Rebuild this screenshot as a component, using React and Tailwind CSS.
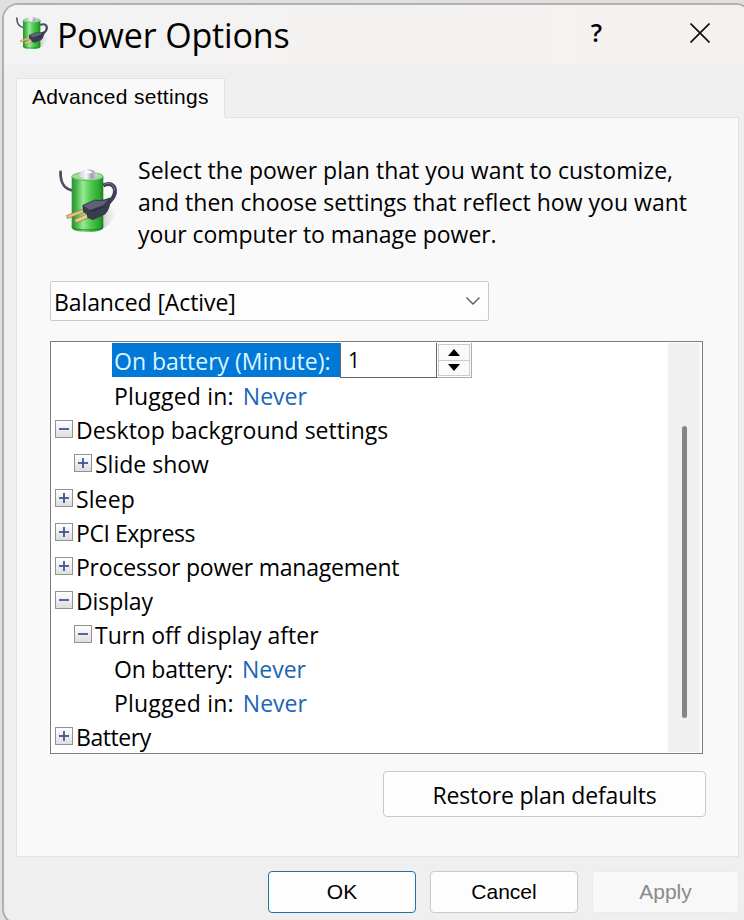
import { useState } from "react";

const plans = ["Balanced [Active]"];

const settings = [
  { label: "Plugged in:", value: "Never", level: 2, spacing: "tracking-[0.2px]" },
  { label: "Desktop background settings", level: 0, open: true, spacing: "tracking-normal" },
  { label: "Slide show", level: 1, open: false, spacing: "tracking-normal" },
  { label: "Sleep", level: 0, open: false, spacing: "tracking-[0.1px]", gap: true },
  { label: "PCI Express", level: 0, open: false, spacing: "tracking-[-0.45px]" },
  { label: "Processor power management", level: 0, open: false, spacing: "tracking-[-0.22px]" },
  { label: "Display", level: 0, open: true, spacing: "tracking-[-0.1px]" },
  { label: "Turn off display after", level: 1, open: true, spacing: "tracking-normal" },
  { label: "On battery:", value: "Never", level: 2, spacing: "tracking-[-0.2px]" },
  { label: "Plugged in:", value: "Never", level: 2, spacing: "tracking-[0.2px]" },
  { label: "Battery", level: 0, open: false, spacing: "tracking-[-0.45px]" },
];

const indents = ["pl-[4px]", "pl-[23px]", "pl-[63px]"];

// ================= ICONS =================

function BatteryIcon({ className }) {
  return (
    <svg viewBox="0 0 60 66" preserveAspectRatio="none" className={className}>
      <defs>
        <linearGradient id="cell" x1="0" x2="1">
          <stop offset="0" stopColor="#2c8f30" />
          <stop offset="0.15" stopColor="#45b548" />
          <stop offset="0.36" stopColor="#9be898" />
          <stop offset="0.6" stopColor="#4fcb4e" />
          <stop offset="0.88" stopColor="#2ba52f" />
          <stop offset="1" stopColor="#1b8021" />
        </linearGradient>
        <linearGradient id="cap" x1="0" x2="1">
          <stop offset="0" stopColor="#cfd1d6" />
          <stop offset="0.4" stopColor="#f7f7f9" />
          <stop offset="0.7" stopColor="#9c9fb6" />
          <stop offset="1" stopColor="#dcdde2" />
        </linearGradient>
        <linearGradient id="shade" x1="0" x2="1">
          <stop offset="0" stopColor="#8b8b8b" stopOpacity="0.7" />
          <stop offset="1" stopColor="#c4c4c4" stopOpacity="0" />
        </linearGradient>
      </defs>
      <path d="M44 42 L58 41 Q58 52 44 61 L36 63 Z" fill="url(#shade)" />
      <path d="M1.500 4 C1.500 14 4 21 14 22.500" fill="none" stroke="#4b4e63" strokeWidth="2.800" strokeLinecap="round" />
      <path d="M12.700 8 V59 Q13 64 28.500 64 Q44 64 44.300 59 V8 Z" fill="url(#cell)" />
      <path d="M12.900 58.500 Q14 62 28.500 62 Q43 62 44.100 58.500" fill="none" stroke="#1d7e24" strokeWidth="1" />
      <ellipse cx="28.500" cy="8.500" rx="15.600" ry="4.200" fill="#9ddc9a" stroke="#58ae58" strokeWidth="0.800" />
      <path d="M20 7 Q22 1.300 29 1.300 Q37 2 38.500 7 Q37 11.500 29 11.300 Q21 11 20 7 Z" fill="url(#cap)" />
      <path d="M25 4 Q29 2 34 4 Q31 6.500 25 4 Z" fill="#fff" />
      <path d="M44.300 17.500 C51 14 57 17 55.800 25 C55 31 50 33 47 38" fill="none" stroke="#3c4054" strokeWidth="4" />
      <path d="M45 16.500 C51 13.500 56 17 55.500 23" fill="none" stroke="#777b8d" strokeWidth="1" />
      <path d="M26 40.500 L7.500 47.500 L8.500 50.500 L27 44 Z" fill="#e9c27c" stroke="#8b6434" strokeWidth="0.600" />
      <path d="M31 44.500 L15.500 51.500 L17 54.800 L33 48.500 Z" fill="#edc98a" stroke="#8b6434" strokeWidth="0.600" />
      <path d="M23.500 37 L36 31.500 Q44 33 51 29.500 Q52.500 40 46 46.500 L34 52 L28.500 50 L27.500 46 L24 44 Z" fill="#393c4e" />
      <path d="M24.500 37.500 L36 32.500 Q42 34 49 32 L44 37 L31 42 Z" fill="#5f6274" />
      <path d="M31 43.500 L46 38.500" stroke="#232534" strokeWidth="0.900" />
    </svg>
  );
}

function ExpandBox({ open, onClick }) {
  return (
    <button
      onClick={onClick}
      className="flex h-[18px] w-[18px] shrink-0 items-center justify-center border border-[#929292] bg-linear-to-b from-white to-[#dedede]"
    >
      <svg viewBox="0 0 16 16" className="h-4 w-4" stroke="#3f5693" strokeWidth="1.800">
        <path d="M3 8 H13" />
        {!open && <path d="M8 3 V13" />}
      </svg>
    </button>
  );
}

// ================= TREE ROW =================

function SettingRow({ item }) {
  const [open, setOpen] = useState(item.open);

  return (
    <div className={`flex h-[34px] shrink-0 items-center whitespace-nowrap ${item.gap ? "mt-px" : ""} ${indents[item.level]}`}>
      {item.level < 2 && <ExpandBox open={open} onClick={() => setOpen(!open)} />}
      <span className={`pt-[2px] ${item.level < 2 ? "ml-[3px]" : ""} ${item.spacing}`}>{item.label}</span>
      {item.value && <span className="ml-[9px] pt-[2px] text-[#1a66b8]">{item.value}</span>}
    </div>
  );
}

export default function App() {
  const [minutes, setMinutes] = useState(1);

  return (
    <div className="h-[920px] w-[744px] overflow-hidden bg-[#e0e0e0] pt-[3px] pl-[2px] font-['Open_Sans',sans-serif] text-black">
      <div className="flex h-[922px] w-[750px] flex-col overflow-hidden rounded-[16px] border-2 border-[#b0b0b0] bg-[#efefef]">

        {/* ================= TITLE BAR ================= */}
        <div className="flex h-[60px] shrink-0 items-center bg-linear-to-r from-[#f3f3f3] to-[#f5f1ef] pl-[12px]">
          <BatteryIcon className="-mt-[4px] h-[34px] w-[33px]" />
          <h1 className="ml-[8px] text-[34px] leading-none tracking-[-0.15px] whitespace-nowrap">Power Options</h1>
          <span className="mb-[4px] ml-auto text-[25px] font-semibold">?</span>
          <svg viewBox="0 0 20 20" className="mr-[40px] mb-[4px] ml-[88px] h-5 w-5" stroke="#111" strokeWidth="1.700">
            <path d="M0.500 0.500 L19.500 19.500 M19.500 0.500 L0.500 19.500" />
          </svg>
        </div>

        {/* ================= TAB ================= */}
        <div className="mt-[13px] ml-[12px] flex h-[40px] w-[209px] shrink-0 items-center border border-b-0 border-[#e2e2e2] bg-[#f9f9f9] pb-[3px] pl-[15px] font-['Liberation_Sans',sans-serif] text-[21px] tracking-[0.3px] whitespace-nowrap">
          Advanced settings
        </div>

        <div className="-mt-px ml-[12px] flex h-[740px] w-[723px] shrink-0 flex-col border border-t-0 border-[#e2e2e2] bg-[#f9f9f9] pl-[33px]">
          <div className="-ml-[33px] h-px shrink-0 pl-[208px]">
            <div className="h-px bg-[#e2e2e2]" />
          </div>

          <div className="mt-[46px] flex h-[66px]">
            <BatteryIcon className="mt-[4px] ml-[9px] h-[66px] w-[60px] shrink-0" />
            <div className="-mt-[10px] ml-[19px] text-[23px] leading-[32px] tracking-[0.025px] whitespace-nowrap">
              <p>Select the power plan that you want to customize,</p>
              <p>and then choose settings that reflect how you want</p>
              <p className="tracking-[-0.05px]">your computer to manage power.</p>
            </div>
          </div>

          <button className="mt-[51px] flex h-[40px] w-[439px] shrink-0 items-center justify-between rounded-[2px] border border-[#cacaca] bg-[#fdfdfd] pr-[8px] pl-[3px] text-[23px]">
            <span className="pt-[2px] tracking-[-0.1px]">{plans[0]}</span>
            <svg viewBox="0 0 14 8" className="h-2 w-3.500" fill="none" stroke="#555" strokeWidth="1.300">
              <path d="M0.500 0.500 L7 7 L13.500 0.500" />
            </svg>
          </button>

          {/* ================= SETTINGS TREE ================= */}
          <div className="mt-[20px] flex h-[413px] w-[653px] shrink-0 overflow-hidden border border-[#7b7d80] bg-white text-[23px]">
            <div className="flex flex-1 flex-col">
              <div className="flex h-[36px] shrink-0 items-start pl-[61px]">
                <div className="mt-px flex h-[34px] w-[228px] items-center bg-[#0078d7] pt-[2px] pl-[2px] whitespace-nowrap text-[#dff4ff]">
                  On battery (Minute):
                </div>
                <div className="mt-px flex h-[35px] w-[97px] items-center border-r border-b border-l border-[#666] pt-px pl-[7px] text-[21px]">
                  {minutes}
                </div>
                <div className="mt-px flex h-[35px] w-[35px] flex-col border-r border-b border-[#aaa] p-px">
                  <button
                    onClick={() => setMinutes(minutes + 1)}
                    className="flex flex-1 items-center justify-center border border-[#ccc] bg-[#fafafa]"
                  >
                    <svg viewBox="0 0 12 7" className="h-[7px] w-3"><path d="M6 0 L12 7 H0 Z" /></svg>
                  </button>
                  <button
                    onClick={() => setMinutes(Math.max(0, minutes - 1))}
                    className="flex flex-1 items-center justify-center border border-t-0 border-[#ccc] bg-[#fafafa]"
                  >
                    <svg viewBox="0 0 12 7" className="h-[7px] w-3"><path d="M0 0 H12 L6 7 Z" /></svg>
                  </button>
                </div>
              </div>

              {settings.map((item, index) => (
                <SettingRow key={index} item={item} />
              ))}
            </div>

            <div className="mt-px mr-[2px] mb-px w-[32px] bg-[#f0f0f0] pt-[83px] pl-[14px]">
              <div className="h-[292px] w-[5px] rounded-full bg-[#858585]" />
            </div>
          </div>

          <button className="mt-[17px] ml-[333px] h-[46px] w-[323px] shrink-0 rounded-[4px] border border-[#c8c8c8] bg-[#fdfdfd] pt-[2px] text-[23px] tracking-[-0.17px]">
            Restore plan defaults
          </button>
        </div>

        {/* ================= FOOTER BUTTONS ================= */}
        <div className="mt-[14px] ml-[264px] flex shrink-0 gap-[14px] font-['Liberation_Sans',sans-serif] text-[21px]">
          <button className="h-[42px] w-[148px] rounded-[4px] border border-[#2472a4] bg-[#fdfdfd]">OK</button>
          <button className="h-[42px] w-[148px] rounded-[4px] border border-[#c8c8c8] bg-[#fdfdfd]">Cancel</button>
          <button className="h-[42px] w-[147px] rounded-[4px] border border-[#ebebeb] bg-[#f8f8f8] text-[#8a8a8a]">Apply</button>
        </div>

      </div>
    </div>
  );
}
